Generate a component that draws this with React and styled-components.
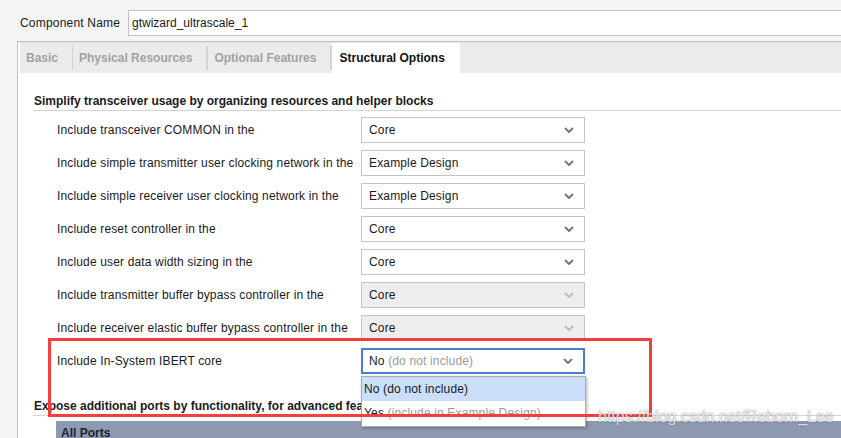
import React from 'react';
import styled, { createGlobalStyle } from 'styled-components';

const GlobalStyle = createGlobalStyle`
  html, body {
    margin: 0;
    padding: 0;
    background: #f4f4f4;
    overflow: hidden;
  }
  body {
    font-family: "Liberation Sans", Arial, sans-serif;
    font-size: 12px;
    color: #1a1a1a;
  }
`;

const Page = styled.div`
  position: relative;
  width: 841px;
  height: 438px;
  overflow: hidden;
`;

const NameRow = styled.div`
  display: flex;
  align-items: center;
  height: 26px;
  padding: 10px 0 0 20px;
`;

const NameLabel = styled.div`
  width: 108px;
  flex: none;
  letter-spacing: 0.2px;
`;

const NameInput = styled.div`
  flex: 1;
  height: 24px;
  margin-right: -10px;
  display: flex;
  align-items: center;
  padding-left: 3px;
  background: #fff;
  border: 1px solid #c2c2c2;
`;

const Panel = styled.div`
  margin: 5px -10px 0 17px;
  border-top: 1px solid #c4c4c4;
  border-left: 1px solid #c4c4c4;
  padding-top: 1px;
  background: #fff;
  box-shadow: inset 0 1px 0 #e2e2e2;
  height: 420px;
`;

const TabBar = styled.div`
  display: flex;
  align-items: center;
  height: 30px;
  margin-left: 2px;
  background: #ebebeb;
`;

const Tab = styled.div`
  height: 30px;
  display: flex;
  align-items: center;
  padding: ${p => (p.$active ? '0 15px 0 7px' : '0 14px 0 6px')};
  font-weight: bold;
  color: ${p => (p.$active ? '#111' : '#a2a2a2')};
  background: ${p => (p.$active ? '#fff' : 'transparent')};
`;

const TabSep = styled.div`
  width: ${p => p.$w}px;
  height: 24px;
  background: #d2d2d2;
  flex: none;
`;

const Content = styled.div`
  padding: 21px 0 0 15px;
`;

const SectionTitle = styled.div`
  font-weight: bold;
  line-height: 14px;
  padding: 0 0 2px 1px;
  border-bottom: 1px solid #d4d4d4;
  white-space: nowrap;
  margin-top: ${p => p.$top || 0}px;
`;

const Rows = styled.div`
  margin-top: 6px;
  margin-left: 24px;
  display: flex;
  flex-direction: column;
  gap: 7px;
`;

const Row = styled.div`
  display: flex;
  align-items: center;
  height: 26px;
`;

const Label = styled.div`
  width: 304px;
  flex: none;
  white-space: nowrap;
  letter-spacing: 0.15px;
`;

const SelectWrap = styled.div`
  position: relative;
`;

const Select = styled.div`
  box-sizing: border-box;
  width: 224px;
  height: 26px;
  display: flex;
  align-items: center;
  justify-content: space-between;
  padding: 0 10px 0 ${p => (p.$focus ? 6 : 7)}px;
  background: ${p => (p.$disabled ? '#eeeeee' : '#fff')};
  border: ${p => (p.$focus ? '2px solid #4c7bd0' : '1px solid #c4c4c4')};
  color: #1a1a1a;
  letter-spacing: 0.15px;
`;

const Muted = styled.span`
  color: #9a9a9a;
`;

const Chevron = ({ light }) => (
  <svg width="10" height="6" viewBox="0 0 10 6">
    <polyline
      points="1,1 5,5 9,1"
      fill="none"
      stroke={light ? '#bdbdbd' : '#777'}
      strokeWidth="2"
    />
  </svg>
);

const Popup = styled.div`
  position: absolute;
  top: 28px;
  left: 0;
  width: 225px;
  box-sizing: border-box;
  background: #fff;
  border: 1px solid #ababab;
  box-shadow: 1px 1px 3px rgba(0, 0, 0, 0.3);
  padding-bottom: 1px;
  z-index: 2;
  letter-spacing: 0.15px;
`;

const PopupItem = styled.div`
  height: 24px;
  display: flex;
  align-items: center;
  padding-left: 2px;
  background: ${p => (p.$hl ? '#cbdffb' : 'transparent')};
  white-space: nowrap;
`;

const PortsBar = styled.div`
  margin: 5px 0 0 23px;
  height: 24px;
  background: #8d99b0;
  display: flex;
  align-items: center;
  padding-left: 5px;
  font-weight: bold;
  color: #1e2330;
`;

const Annotation = styled.div`
  position: absolute;
  left: 48px;
  top: 338px;
  width: 604px;
  height: 79px;
  box-sizing: border-box;
  border: 3px solid #f53d3d;
  z-index: 3;
  pointer-events: none;
`;

const Watermark = styled.div`
  position: absolute;
  left: 598px;
  top: 408px;
  font-size: 16px;
  line-height: 18px;
  color: rgba(255, 255, 255, 0.8);
  text-shadow: 0 0 1.5px rgba(60, 60, 60, 0.7);
  z-index: 4;
  white-space: nowrap;
`;

const rows = [
  { label: 'Include transceiver COMMON in the', value: 'Core' },
  { label: 'Include simple transmitter user clocking network in the', value: 'Example Design' },
  { label: 'Include simple receiver user clocking network in the', value: 'Example Design' },
  { label: 'Include reset controller in the', value: 'Core' },
  { label: 'Include user data width sizing in the', value: 'Core' },
  { label: 'Include transmitter buffer bypass controller in the', value: 'Core', disabled: true },
  { label: 'Include receiver elastic buffer bypass controller in the', value: 'Core', disabled: true },
];

export default function App() {
  return (
    <Page>
      <GlobalStyle />
      <NameRow>
        <NameLabel>Component Name</NameLabel>
        <NameInput>gtwizard_ultrascale_1</NameInput>
      </NameRow>
      <Panel>
        <TabBar>
          <Tab>Basic</Tab>
          <TabSep $w={1} />
          <Tab>Physical Resources</Tab>
          <TabSep $w={2} />
          <Tab>Optional Features</Tab>
          <TabSep $w={2} />
          <Tab $active>Structural Options</Tab>
        </TabBar>
        <Content>
          <SectionTitle>Simplify transceiver usage by organizing resources and helper blocks</SectionTitle>
          <Rows>
            {rows.map(r => (
              <Row key={r.label}>
                <Label>{r.label}</Label>
                <Select $disabled={r.disabled}>
                  <span>{r.value}</span>
                  <Chevron light={r.disabled} />
                </Select>
              </Row>
            ))}
            <Row>
              <Label>Include In-System IBERT core</Label>
              <SelectWrap>
                <Select $focus>
                  <span>
                    No <Muted>(do not include)</Muted>
                  </span>
                  <Chevron />
                </Select>
                <Popup>
                  <PopupItem $hl>No (do not include)</PopupItem>
                  <PopupItem>
                    Yes&nbsp;<Muted>(include in Example Design)</Muted>
                  </PopupItem>
                </Popup>
              </SelectWrap>
            </Row>
          </Rows>
          <SectionTitle $top={25}>Expose additional ports by functionality, for advanced feature usage</SectionTitle>
          <PortsBar>All Ports</PortsBar>
        </Content>
      </Panel>
      <Annotation />
      <Watermark>https://blog.csdn.net/Reborn_Lee</Watermark>
    </Page>
  );
}
